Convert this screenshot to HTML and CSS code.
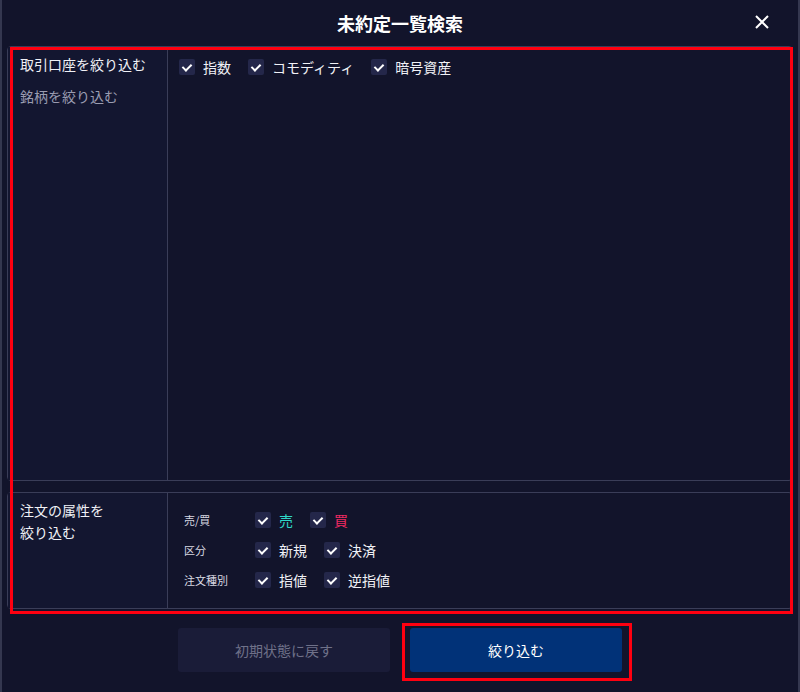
FILE: index.html
```html
<!DOCTYPE html>
<html lang="ja">
<head>
  <meta charset="UTF-8" />
  <title>未約定一覧検索</title>
  <link rel="stylesheet" href="styles.css">
</head>
<body>
  <div class="dialog">
    <div class="header">
      <h1>未約定一覧検索</h1>
      <svg class="close-btn" width="14" height="14" viewBox="0 0 14 14">
        <path d="M1 1 L13 13 M13 1 L1 13" stroke="#fff" stroke-width="2" fill="none" />
      </svg>
    </div>

    <div class="panel panel-account">
      <div class="side">
        <div class="side-item active">取引口座を絞り込む</div>
        <div class="side-item">銘柄を絞り込む</div>
      </div>
      <div class="main">
        <div class="checks">
          <label class="check"><span class="box"></span>指数</label>
          <label class="check"><span class="box"></span>コモディティ</label>
          <label class="check"><span class="box"></span>暗号資産</label>
        </div>
      </div>
    </div>

    <div class="panel panel-attr">
      <div class="side">
        <div class="side-item active">注文の属性を<br>絞り込む</div>
      </div>
      <div class="main">
        <div class="attr-row">
          <span class="attr-label">売/買</span>
          <label class="check sell"><span class="box"></span>売</label>
          <label class="check buy"><span class="box"></span>買</label>
        </div>
        <div class="attr-row">
          <span class="attr-label">区分</span>
          <label class="check"><span class="box"></span>新規</label>
          <label class="check"><span class="box"></span>決済</label>
        </div>
        <div class="attr-row">
          <span class="attr-label">注文種別</span>
          <label class="check"><span class="box"></span>指値</label>
          <label class="check"><span class="box"></span>逆指値</label>
        </div>
      </div>
    </div>

    <div class="footer">
      <button class="btn btn-reset">初期状態に戻す</button>
      <button class="btn btn-apply">絞り込む</button>
    </div>

    <!-- annotation frames -->
    <div class="mark mark-panels"></div>
    <div class="mark mark-apply"></div>
  </div>
</body>
</html>
```

FILE: styles.css
```css
body {
  margin: 0;
  background-color: #11132a;
  font-family: "Noto Sans CJK JP", "Noto Sans", sans-serif;
  color: #e8e9f0;
}
.dialog {
  position: relative;
  width: 800px;
  height: 692px;
  box-sizing: border-box;
  border-left: 2px solid #34374f;
  border-right: 2px solid #34374f;
  background-color: #12142b;
}
.header {
  height: 46px;
  display: flex;
  align-items: center;
  justify-content: center;
  position: relative;
}
.header h1 {
  margin: 0;
  font-size: 18px;
  font-weight: bold;
  color: #fff;
}
.close-btn {
  position: absolute;
  right: 29px;
  top: 15px;
}
.panel {
  margin: 0 5px;
  border: 1px solid #3a3d58;
  border-radius: 4px;
  display: flex;
}
.panel-account {
  height: 433px;
}
.panel-attr {
  margin-top: 11px;
  height: 115px;
}
.side {
  width: 160px;
  flex: none;
  border-right: 1px solid #3a3d58;
  background-color: #131630;
  padding: 6px 0 0 12px;
  box-sizing: border-box;
}
.side-item {
  font-size: 14px;
  line-height: 22px;
  color: #9a9cb0;
  margin-bottom: 10px;
}
.side-item.active {
  color: #f0f1f6;
}
.main {
  flex: 1;
  padding: 10px 12px 0 11px;
}
.checks {
  display: flex;
  gap: 17px;
}
.check {
  display: flex;
  align-items: center;
  font-size: 14px;
  color: #f0f1f6;
}
.box {
  width: 16px;
  height: 16px;
  border-radius: 2px;
  background-color: #24274a;
  margin-right: 8px;
  position: relative;
}
.box::after {
  content: "";
  position: absolute;
  left: 5px;
  top: 3px;
  width: 4px;
  height: 7px;
  border-right: 2px solid #fff;
  border-bottom: 2px solid #fff;
  transform: rotate(45deg);
}
.panel-attr .main {
  padding: 12px 0 0 16px;
}
.attr-row {
  display: flex;
  align-items: center;
  height: 30px;
}
.attr-label {
  width: 71px;
  font-size: 11px;
  color: #d8d9e2;
}
.attr-row .check {
  margin-right: 16px;
}
.attr-row .check + .check {
  margin-left: 1px;
}
.check.sell {
  color: #2fd8c8;
}
.check.buy {
  color: #ee2a62;
}
.footer {
  display: flex;
  justify-content: center;
  gap: 20px;
  margin-top: 19px;
}
.btn {
  width: 212px;
  height: 44px;
  border: none;
  border-radius: 3px;
  font-family: "Noto Sans CJK JP", "Noto Sans", sans-serif;
  font-size: 14px;
}
.btn-reset {
  background-color: #1a1c38;
  color: #6f7189;
}
.btn-apply {
  background-color: #013278;
  color: #fff;
}
.mark {
  position: absolute;
  border: 3px solid #ff0010;
  pointer-events: none;
}
.mark-panels {
  left: 8px;
  top: 47px;
  width: 777px;
  height: 561px;
}
.mark-apply {
  left: 400px;
  top: 623px;
  width: 224px;
  height: 52px;
}
```
